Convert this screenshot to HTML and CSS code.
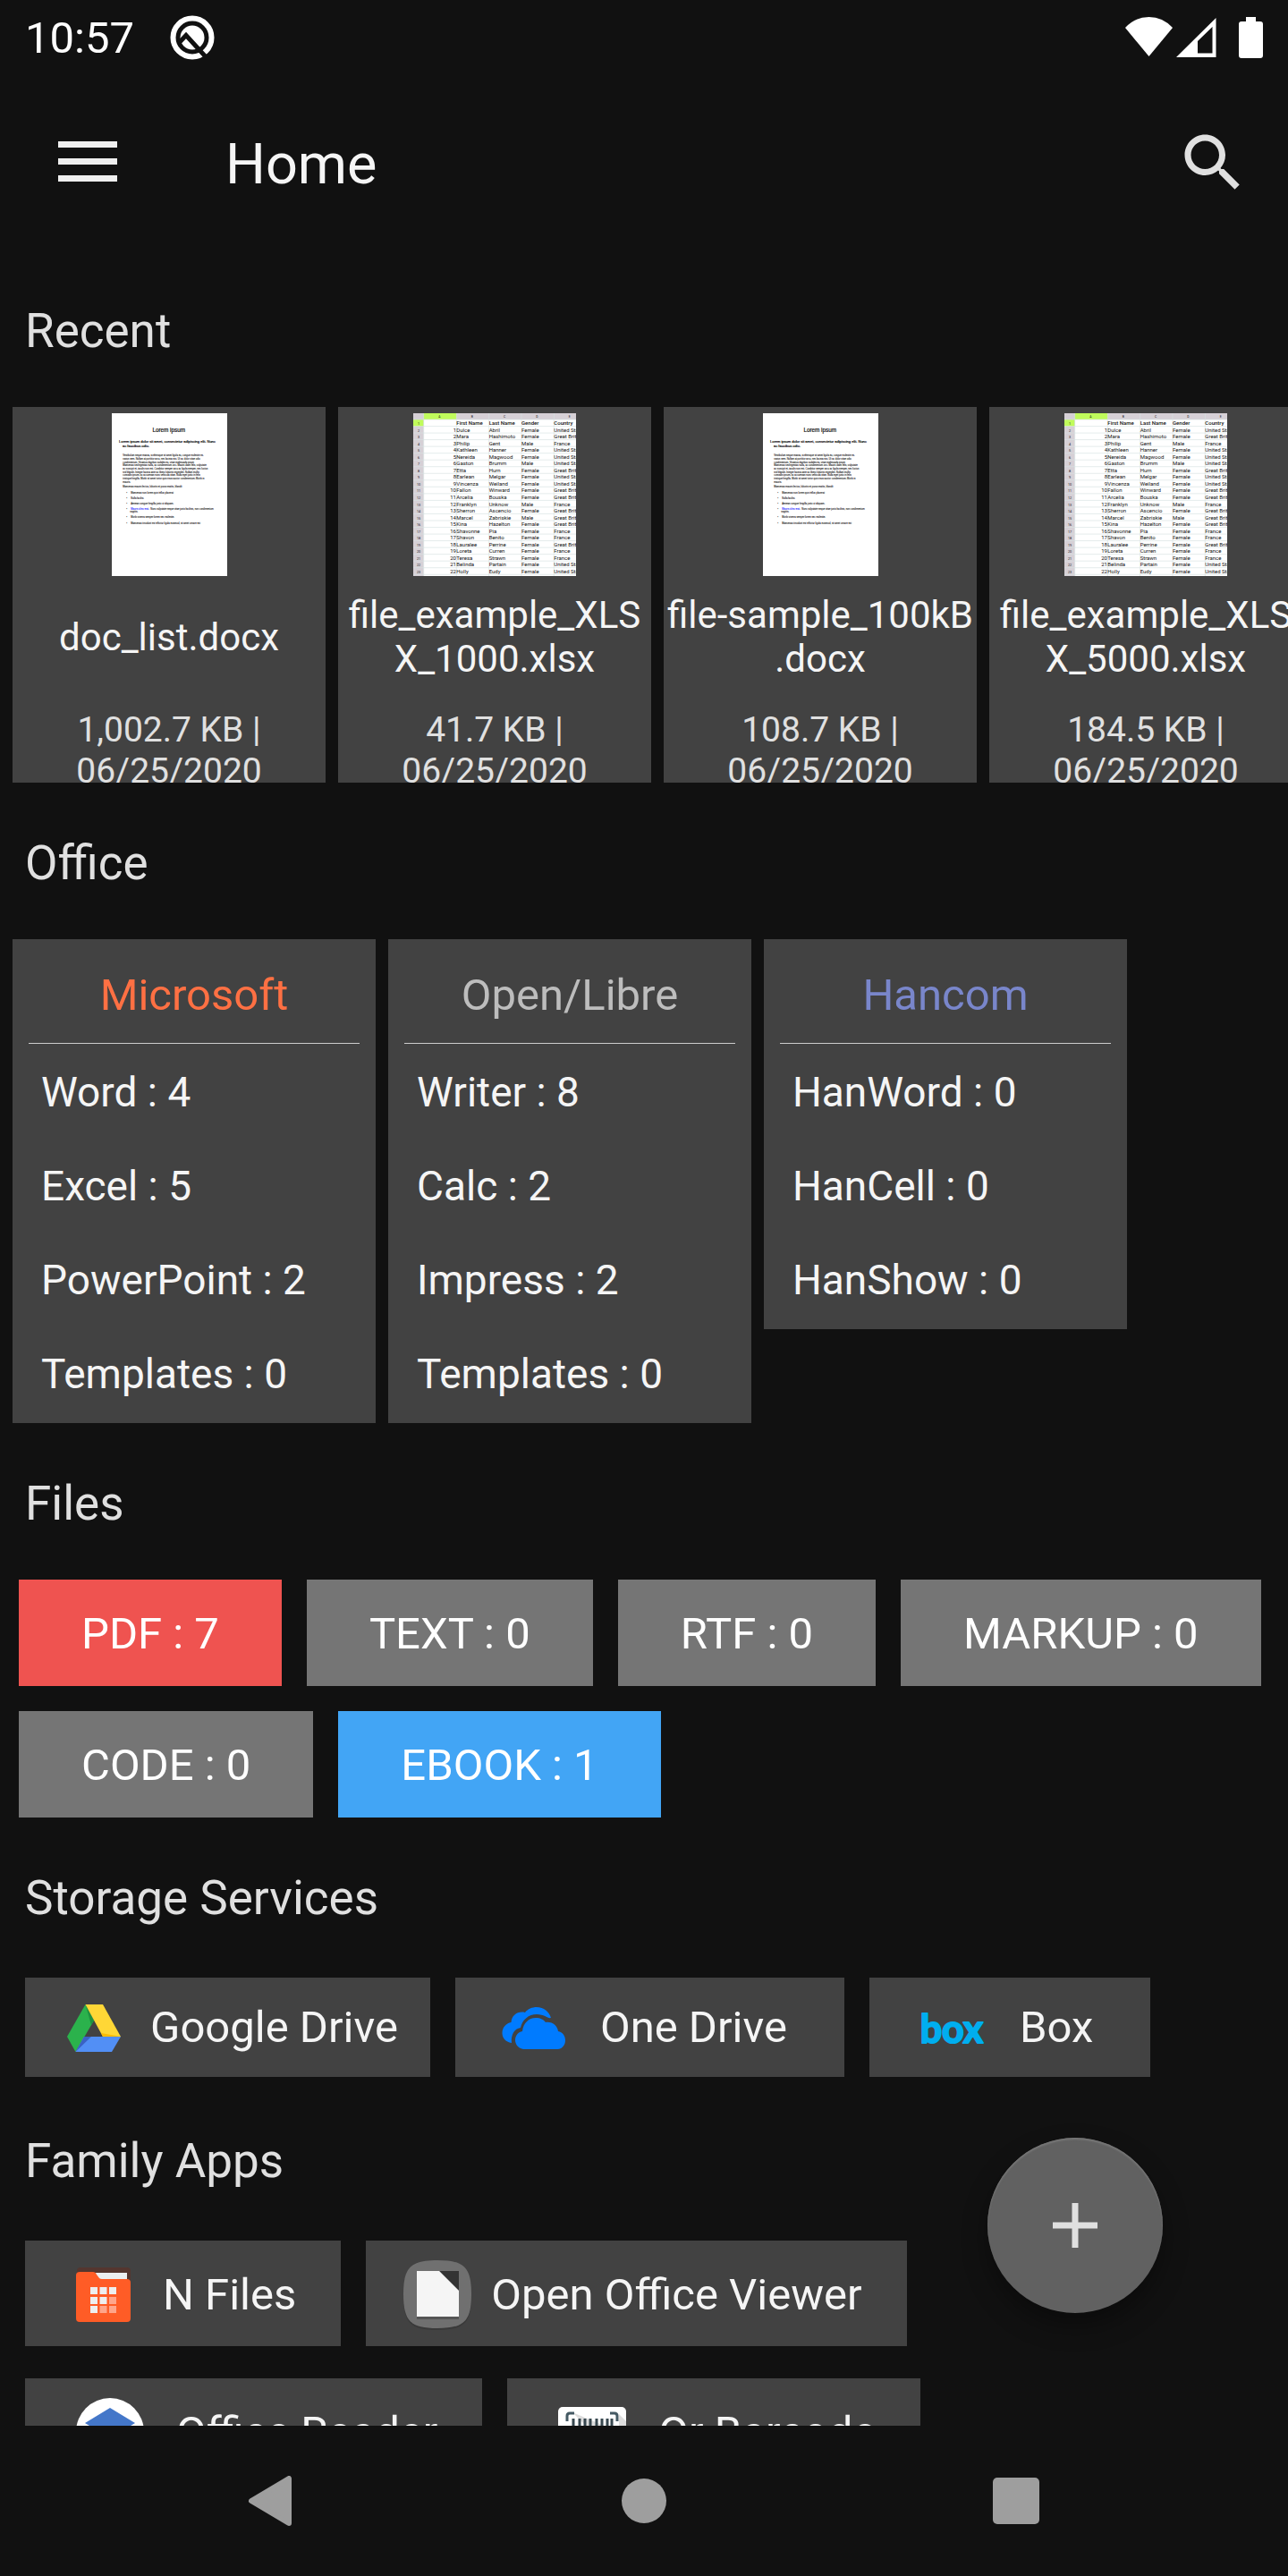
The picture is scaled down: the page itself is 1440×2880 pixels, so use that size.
FILE: index.html
```html
<!DOCTYPE html>
<html lang="en">
<head>
    <meta charset="UTF-8">
    <meta name="viewport" content="width=device-width, initial-scale=1.0">
    <title>Home</title>
    <link rel="stylesheet" href="styles.css">
</head>
<body>
    <!-- Thumbnails, cloned into the recent cards by script.js -->
    <template id="docThumb">
        <svg class="thumb" viewBox="0 0 387 546">
            <rect width="387" height="546" fill="#fff"/>
            <g font-family="Liberation Sans, Arial, sans-serif" font-size="8" fill="#111" stroke="#111" stroke-width="0.2">
                <text x="191" y="62" font-size="19" text-anchor="middle" stroke-width="0.6">Lorem ipsum</text>
                <g font-size="12" fill="#000" stroke="#000" stroke-width="0.5">
                    <text x="24" y="99">Lorem ipsum dolor sit amet, consectetur adipiscing elit. Nunc</text>
                    <text x="36" y="113">ac faucibus odio.</text>
                </g>
                <text x="37" y="145">Vestibulum neque massa, scelerisque sit amet ligula eu, congue molestie mi.</text>
                <text x="37" y="156">varius sem. Nullam at porttitor arcu, nec lacinia nisi. Ut ac dolor vitae odio</text>
                <text x="37" y="167">condimentum. Vivamus dapibus sodales ex, vitae malesuada ipsum</text>
                <text x="37" y="178">Maecenas sed egestas nulla, ac condimentum orci. Mauris diam felis, vulputate</text>
                <text x="37" y="189">ac suscipit et, iaculis non est. Curabitur semper arcu ac ligula semper, nec luctus</text>
                <text x="37" y="200">nisl blandit. Integer lacinia ante ac libero lobortis imperdiet. Nullam mollis</text>
                <text x="37" y="211">convallis ipsum, ac accumsan nunc vehicula vitae. Nulla eget justo in felis</text>
                <text x="37" y="222">tristique fringilla. Morbi sit amet tortor quis risus auctor condimentum. Morbi in</text>
                <text x="37" y="233">mauris.</text>
                <text x="37" y="250">Maecenas mauris lectus, lobortis et purus mattis, blandit</text>
                <text x="49" y="269">•</text><text x="64" y="269">Maecenas non lorem quis tellus placerat</text>
                <text x="49" y="287">•</text><text x="64" y="287">Nulla facilisi.</text>
                <text x="49" y="306">•</text><text x="64" y="306">Aenean congue fringilla justo ut aliquam.</text>
                <text x="49" y="324">•</text><text x="64" y="324" fill="#22f" stroke="#22f">Mauris id ex erat.</text>
                <text x="130" y="324">Nunc vulputate neque vitae justo facilisis, non condimentum</text>
                <text x="61" y="333">sagittis.</text>
                <text x="49" y="352">•</text><text x="64" y="352">Morbi viverra semper lorem nec molestie.</text>
                <text x="49" y="371">•</text><text x="64" y="371">Maecenas tincidunt est efficitur ligula euismod, sit amet ornare est</text>
            </g>
        </svg>
    </template>
    <template id="sheetThumb">
        <svg class="thumb" viewBox="0 0 546 546">
            <rect width="546" height="546" fill="#fff"/>
            <rect width="546" height="21" fill="#d6d0d6"/>
            <rect width="35" height="546" fill="#d6d0d6"/>
            <rect x="35" width="110" height="21" fill="#c0fb5b"/>
            <rect y="21" width="35" height="23" fill="#c0fb5b"/>
            <g class="lines" stroke="#d8e2e2" stroke-width="2"></g>
            <g class="cells" font-family="Roboto, sans-serif" font-size="18" fill="#111"></g>
        </svg>
    </template>

    <div class="screen">
        <header>
            <div class="status-bar">
                <span>10:57</span>
                <svg class="debug-icon" width="50" height="50" viewBox="0 0 50 50">
                    <circle cx="25" cy="25" r="21.5" fill="none" stroke="#fff" stroke-width="6"/>
                    <circle cx="25" cy="25" r="13.5" fill="#fff"/>
                    <path d="M10 31l8-8.500l26 28.500" fill="none" stroke="#111" stroke-width="5"/>
                </svg>
                <svg class="system-icons" width="156" height="48" viewBox="0 0 156 48" fill="#fff">
                    <path d="M2 13Q13 1 28.500 1T55 13L28.500 45z"/>
                    <path fill-rule="evenodd" d="M59 46L103.500 2v44zM83 28v13.500h16.500V12z"/>
                    <path d="M137 1h11v5h5q3 0 3 3v35q0 3-3 3h-21q-3 0-3-3V9q0-3 3-3h5z"/>
                </svg>
            </div>
            <div class="app-bar">
                <button class="icon-button" type="button" aria-label="Open menu">
                    <svg width="84" height="84" viewBox="0 0 84 84" fill="#eee"><path d="M9 18h66v7H9zM9 37h66v7H9zM9 56h66v7H9z"/></svg>
                </button>
                <h1>Home</h1>
                <button class="icon-button" type="button" aria-label="Search">
                    <svg width="84" height="84" viewBox="0 0 24 24" fill="#e0e0e0"><path d="M15.500 14h-.79l-.28-.27C15.410 12.590 16 11.110 16 9.500 16 5.910 13.090 3 9.500 3S3 5.910 3 9.500 5.910 16 9.500 16c1.610 0 3.090-.59 4.230-1.570l.27.28v.79l5 4.990L20.490 19l-4.990-5zm-6 0C7.010 14 5 11.990 5 9.500S7.010 5 9.500 5 14 7.010 14 9.500 11.990 14 9.500 14z"/></svg>
                </button>
            </div>
        </header>

        <main>
            <h2>Recent</h2>
            <div class="recent-list">
                <a class="recent-card" href="#" data-thumb="docThumb">
                    <span class="file-name"><span>doc_list.docx</span></span>
                    <span class="file-info">1,002.7 KB | 06/25/2020</span>
                </a>
                <a class="recent-card" href="#" data-thumb="sheetThumb">
                    <span class="file-name"><span>file_example_XLSX_1000.xlsx</span></span>
                    <span class="file-info">41.7 KB | 06/25/2020</span>
                </a>
                <a class="recent-card" href="#" data-thumb="docThumb">
                    <span class="file-name"><span>file-sample_100kB<wbr>.docx</span></span>
                    <span class="file-info">108.7 KB | 06/25/2020</span>
                </a>
                <a class="recent-card" href="#" data-thumb="sheetThumb">
                    <span class="file-name"><span>file_example_XLSX_5000.xlsx</span></span>
                    <span class="file-info">184.5 KB | 06/25/2020</span>
                </a>
            </div>

            <h2>Office</h2>
            <div class="office-list">
                <section class="office-card">
                    <h3 class="microsoft">Microsoft</h3>
                    <a href="#">Word : 4</a>
                    <a href="#">Excel : 5</a>
                    <a href="#">PowerPoint : 2</a>
                    <a href="#">Templates : 0</a>
                </section>
                <section class="office-card">
                    <h3 class="libre">Open/Libre</h3>
                    <a href="#">Writer : 8</a>
                    <a href="#">Calc : 2</a>
                    <a href="#">Impress : 2</a>
                    <a href="#">Templates : 0</a>
                </section>
                <section class="office-card">
                    <h3 class="hancom">Hancom</h3>
                    <a href="#">HanWord : 0</a>
                    <a href="#">HanCell : 0</a>
                    <a href="#">HanShow : 0</a>
                </section>
            </div>

            <h2>Files</h2>
            <div class="file-types">
                <button class="pdf" type="button">PDF : 7</button>
                <button type="button">TEXT : 0</button>
                <button type="button">RTF : 0</button>
                <button type="button">MARKUP : 0</button>
                <button type="button">CODE : 0</button>
                <button class="ebook" type="button">EBOOK : 1</button>
            </div>

            <h2>Storage Services</h2>
            <div class="chips storage">
                <button class="chip google-drive" type="button">
                    <svg width="84" height="84" viewBox="0 0 84 84">
                        <path fill="#2bb24c" d="M12 52L32.500 16 42 34 21.500 69z"/>
                        <path fill="#1e9140" d="M32.500 16L42 34l-3 5z"/>
                        <path fill="#ffd736" d="M32.500 16H52l20 36H52z"/>
                        <path fill="#fbbc05" d="M50 48l22 4H52z"/>
                        <path fill="#528ff5" d="M31 52h41L62 69H21.500z"/>
                        <path fill="#3a62c4" d="M31 52h8L21.500 69z"/>
                    </svg>
                    Google Drive
                </button>
                <button class="chip one-drive" type="button">
                    <svg width="84" height="84" viewBox="0 0 84 84" fill="#007bff">
                        <path d="M17 59C10 58 6.500 53 6.500 48c0-6 4-11 10-12C17 28 24 23 32 25c3-4 8-6 13-6 8 0 14 5 16 12C57 32 54 27 45 27c-9 0-16 6-18 15-7 1-11 8-10 17z"/>
                        <path d="M30 66c-6-1-9-6-9-10 0-5 3-9 8-10 1-9 7-15 15-15 5 0 9 2 11 5 8-1 13 4 14 10 5 1 8 5 8 10 0 6-4 10-9 10z"/>
                    </svg>
                    One Drive
                </button>
                <button class="chip box" type="button">
                    <svg width="84" height="84" viewBox="0 0 84 84" aria-hidden="true">
                        <text x="42" y="59" font-family="Lato, sans-serif" font-size="43" font-weight="700" text-anchor="middle" fill="#00aeef" stroke="#00aeef" stroke-width="2" stroke-linejoin="round">box</text>
                    </svg>
                    Box
                </button>
            </div>

            <h2>Family Apps</h2>
            <div class="chips family">
                <button class="chip n-files" type="button">
                    <svg width="84" height="84" viewBox="0 0 84 84">
                        <rect x="12" y="12" width="60" height="30" rx="4" fill="#54362f"/>
                        <rect x="32" y="18" width="36" height="20" fill="#eceff1"/>
                        <path fill="#ff5c26" d="M11 21q0-4 4-4h15q3 0 4 3l3 4q1 1 3 1h28q4 0 4 4v40q0 4-4 4H15q-4 0-4-4z"/>
                        <path fill="#eee" d="M27 34h8v8h-8zM37.500 34h8v8h-8zM48 34h8v8h-8zM27 45h8v8h-8zM37.500 45h8v8h-8zM27 55h8v8h-8z"/>
                        <path fill="#ffa58a" d="M48 45h8v8h-8zM37.500 55h8v8h-8zM48 55h8v8h-8z"/>
                    </svg>
                    N Files
                </button>
                <button class="chip office-viewer" type="button">
                    <svg width="84" height="84" viewBox="0 0 84 84">
                        <path fill="#333" opacity=".6" d="M42 6c30 0 38 8 38 38s-8 38-38 38S4 74 4 44 12 6 42 6z"/>
                        <path fill="#707070" d="M42 4c30 0 38 8 38 38s-8 38-38 38S4 72 4 42 12 4 42 4z"/>
                        <path fill="#555" d="M19 60h47v10H19z"/>
                        <path fill="#333" d="M44 16h22v22z"/>
                        <path fill="#f5f5f5" d="M19 16h25l22 22v29H19z"/>
                    </svg>
                    Open Office Viewer
                </button>
                <button class="chip office-reader" type="button">
                    <svg width="84" height="84" viewBox="0 0 84 84">
                        <circle cx="42" cy="42" r="38" fill="#fff"/>
                        <path fill="#26457f" d="M14 44l28-17 28 17-28 17z"/>
                        <path fill="#4477c9" d="M42 15l28 17-28 17-28-17z"/>
                    </svg>
                    Office Reader
                </button>
                <button class="chip qr-barcode" type="button">
                    <svg width="84" height="84" viewBox="0 0 84 84">
                        <rect x="4" y="14" width="76" height="56" rx="5" fill="#fff"/>
                        <path fill="#ddd" d="M20 20l40 40h20V30L72 22v20z"/>
                        <path fill="none" stroke="#455a64" stroke-width="3" d="M14 30v-6q0-3 3-3h5M62 21h5q3 0 3 3v6M14 54v6q0 3 3 3h5M62 63h5q3 0 3-3v-6"/>
                        <path stroke="#37474f" stroke-width="3" d="M21 27v30M28 27v30M34 27v30M40 27v30M47 27v30M53 27v30M59 27v30M64 27v30"/>
                    </svg>
                    Qr Barcode
                </button>
            </div>
        </main>

        <button class="fab" type="button" aria-label="Add">
            <svg width="50" height="50" viewBox="0 0 50 50" fill="#e0e0e0"><path d="M21.500 0h7v21.500H50v7H28.500V50h-7V28.500H0v-7h21.500z"/></svg>
        </button>

        <nav>
            <button type="button" aria-label="Back">
                <svg width="56" height="56" viewBox="0 0 56 56"><path d="M48 3v50L6 28z"/></svg>
            </button>
            <button type="button" aria-label="Home screen">
                <svg width="56" height="56" viewBox="0 0 56 56"><circle cx="28" cy="28" r="25"/></svg>
            </button>
            <button type="button" aria-label="Recent apps">
                <svg width="56" height="56" viewBox="0 0 56 56"><rect x="1" y="2" width="52" height="52" rx="5"/></svg>
            </button>
        </nav>
    </div>
    <script src="script.js"></script>
</body>
</html>
```

FILE: styles.css
```css
* {
    box-sizing: border-box;
}

body {
    margin: 0;
    background: #111;
    color: #f5f5f5;
    font-family: Roboto, sans-serif;
    font-size: 49px;
    line-height: 57px;
}

h1, h2, h3 {
    margin: 0;
    font-weight: 400;
}

a {
    color: inherit;
    text-decoration: none;
}

button {
    border: 0;
    padding: 0;
    background: none;
    color: inherit;
    font: inherit;
    cursor: pointer;
}

svg {
    display: block;
    flex-shrink: 0;
}

.screen {
    position: relative;
    display: flex;
    flex-direction: column;
    height: 100vh;
}

/* Top bars */
.status-bar {
    display: flex;
    align-items: center;
    height: 84px;
    padding: 0 28px;
    color: #fff;
}

.debug-icon {
    margin-left: 40px;
}

.system-icons {
    margin-left: auto;
}

.app-bar {
    display: flex;
    align-items: center;
    height: 196px;
    padding: 0 42px 0 56px;
}

.app-bar h1 {
    flex: 1;
    margin-left: 112px;
    padding-top: 4px;
    font-size: 63px;
    line-height: 74px;
}

/* Scrolling content */
main {
    flex: 1;
    min-height: 0;
    overflow: hidden;
}

h2 {
    padding: 59px 28px 54px;
    color: #e0e0e0;
    font-size: 53px;
    line-height: 62px;
}

.recent-list {
    display: flex;
    gap: 14px;
    padding: 0 14px;
    overflow: hidden;
}

.recent-card {
    display: flex;
    flex: 0 0 350px;
    flex-direction: column;
    align-items: center;
    height: 420px;
    padding-top: 7px;
    overflow: hidden;
    background: #424242;
    text-align: center;
}

.thumb {
    height: 182px;
}

.file-name {
    display: flex;
    align-items: center;
    flex-shrink: 0;
    height: 136px;
    font-size: 42px;
    line-height: 49px;
    word-break: break-all;
}

.file-info {
    padding: 13px 28px 0;
    color: #e0e0e0;
    font-size: 39px;
    line-height: 46px;
}

.office-list {
    display: flex;
    align-items: flex-start;
    gap: 14px;
    padding: 0 14px;
}

.office-card {
    flex: 0 0 406px;
    padding-bottom: 2px;
    background: #424242;
}

.office-card h3 {
    margin: 0 18px 2px;
    padding: 34px 0 25px;
    border-bottom: 1px solid #ccc;
    font-size: 49px;
    line-height: 57px;
    text-align: center;
}

.office-card a {
    display: block;
    padding: 0 32px;
    font-size: 46px;
    line-height: 105px;
    white-space: nowrap;
}

.office-card .microsoft {
    color: #ff7043;
}

.office-card .libre {
    color: #bdbdbd;
}

.office-card .hancom {
    color: #7986cb;
}

.file-types {
    display: flex;
    flex-wrap: wrap;
    gap: 28px;
    padding: 0 21px;
}

.file-types button {
    height: 119px;
    padding: 2px 70px 0;
    background: #757575;
    color: #fff;
}

.file-types .pdf {
    background: #ef5350;
}

.file-types .ebook {
    background: #42a5f5;
}

.chips {
    display: flex;
    flex-wrap: wrap;
    gap: 36px 28px;
    padding: 4px 28px;
}

.chip {
    display: flex;
    align-items: center;
    gap: 24px;
    height: 118px;
    padding: 2px 50px 0 46px;
    background: #424242;
    white-space: nowrap;
}

.storage .chip {
    height: 111px;
}

.google-drive {
    gap: 21px;
    padding: 0 36px 0 35px;
}

.one-drive {
    gap: 32px;
    padding: 0 64px 0 46px;
}

.box {
    gap: 34px;
    padding: 0 64px 0 50px;
}

.office-viewer {
    gap: 18px;
    padding-left: 38px;
}

.office-reader,
.qr-barcode {
    gap: 32px;
    padding-left: 53px;
}

/* Floating add button */
.fab {
    position: absolute;
    right: 140px;
    bottom: 294px;
    display: flex;
    align-items: center;
    justify-content: center;
    width: 196px;
    height: 196px;
    border-radius: 50%;
    background: #616161;
    box-shadow: inset 0 2px 2px #777, 0 14px 28px rgba(0, 0, 0, 0.35);
}

/* System navigation */
nav {
    display: grid;
    grid-template-columns: repeat(3, 1fr);
    height: 168px;
    padding: 0 94px;
}

nav button {
    display: flex;
    align-items: center;
    justify-content: center;
}

nav svg {
    fill: #9e9e9e;
}

nav path {
    stroke: #9e9e9e;
    stroke-width: 6px;
    stroke-linejoin: round;
}
```

FILE: script.js
```js
// Rows shown in the spreadsheet thumbnail
const people = [
    ["Dulce", "Abril", "Female", "United Sta"],
    ["Mara", "Hashimoto", "Female", "Great Brita"],
    ["Philip", "Gent", "Male", "France"],
    ["Kathleen", "Hanner", "Female", "United Sta"],
    ["Nereida", "Magwood", "Female", "United Sta"],
    ["Gaston", "Brumm", "Male", "United Sta"],
    ["Etta", "Hurn", "Female", "Great Brita"],
    ["Earlean", "Melgar", "Female", "United Sta"],
    ["Vincenza", "Weiland", "Female", "United Sta"],
    ["Fallon", "Winward", "Female", "Great Brita"],
    ["Arcelia", "Bouska", "Female", "Great Brita"],
    ["Franklyn", "Unknow", "Male", "France"],
    ["Sherron", "Ascencio", "Female", "Great Brita"],
    ["Marcel", "Zabriskie", "Male", "Great Brita"],
    ["Kina", "Hazelton", "Female", "Great Brita"],
    ["Shavonne", "Pia", "Female", "France"],
    ["Shavon", "Benito", "Female", "France"],
    ["Lauralee", "Perrine", "Female", "Great Brita"],
    ["Loreta", "Curren", "Female", "France"],
    ["Teresa", "Strawn", "Female", "France"],
    ["Belinda", "Partain", "Female", "United Sta"],
    ["Holly", "Eudy", "Female", "United Sta"]
];
const columns = [145, 254, 363, 472];
const rowHeight = 22.6;

let cells = "";
let lines = "";

["A", "B", "C", "D", "E"].forEach((letter, i) => {
    cells += `<text x="${88 + i * 109}" y="14" font-size="10" text-anchor="middle">${letter}</text>`;
});
["First Name", "Last Name", "Gender", "Country"].forEach((title, i) => {
    cells += `<text x="${columns[i]}" y="39" font-weight="500">${title}</text>`;
});
cells += `<text x="18" y="40" font-size="11" text-anchor="middle">1</text>`;

people.forEach((person, i) => {
    const y = 62 + i * rowHeight;
    cells += `<text x="18" y="${y}" font-size="11" text-anchor="middle">${i + 2}</text>`;
    cells += `<text x="144" y="${y}" text-anchor="end">${i + 1}</text>`;
    person.forEach((value, j) => {
        cells += `<text x="${columns[j]}" y="${y}">${value}</text>`;
    });
});

for (let y = 21; y < 546; y += rowHeight) {
    lines += `<path d="M0 ${y}H546"/>`;
}
[35, ...columns].forEach(x => {
    lines += `<path d="M${x} 0V546"/>`;
});

document.querySelectorAll("[data-thumb]").forEach(card => {
    const template = document.getElementById(card.dataset.thumb);
    const thumb = template.content.firstElementChild.cloneNode(true);
    card.prepend(thumb);

    if (card.dataset.thumb === "sheetThumb") {
        thumb.querySelector(".cells").innerHTML = cells;
        thumb.querySelector(".lines").innerHTML = lines;
    }
});
```
